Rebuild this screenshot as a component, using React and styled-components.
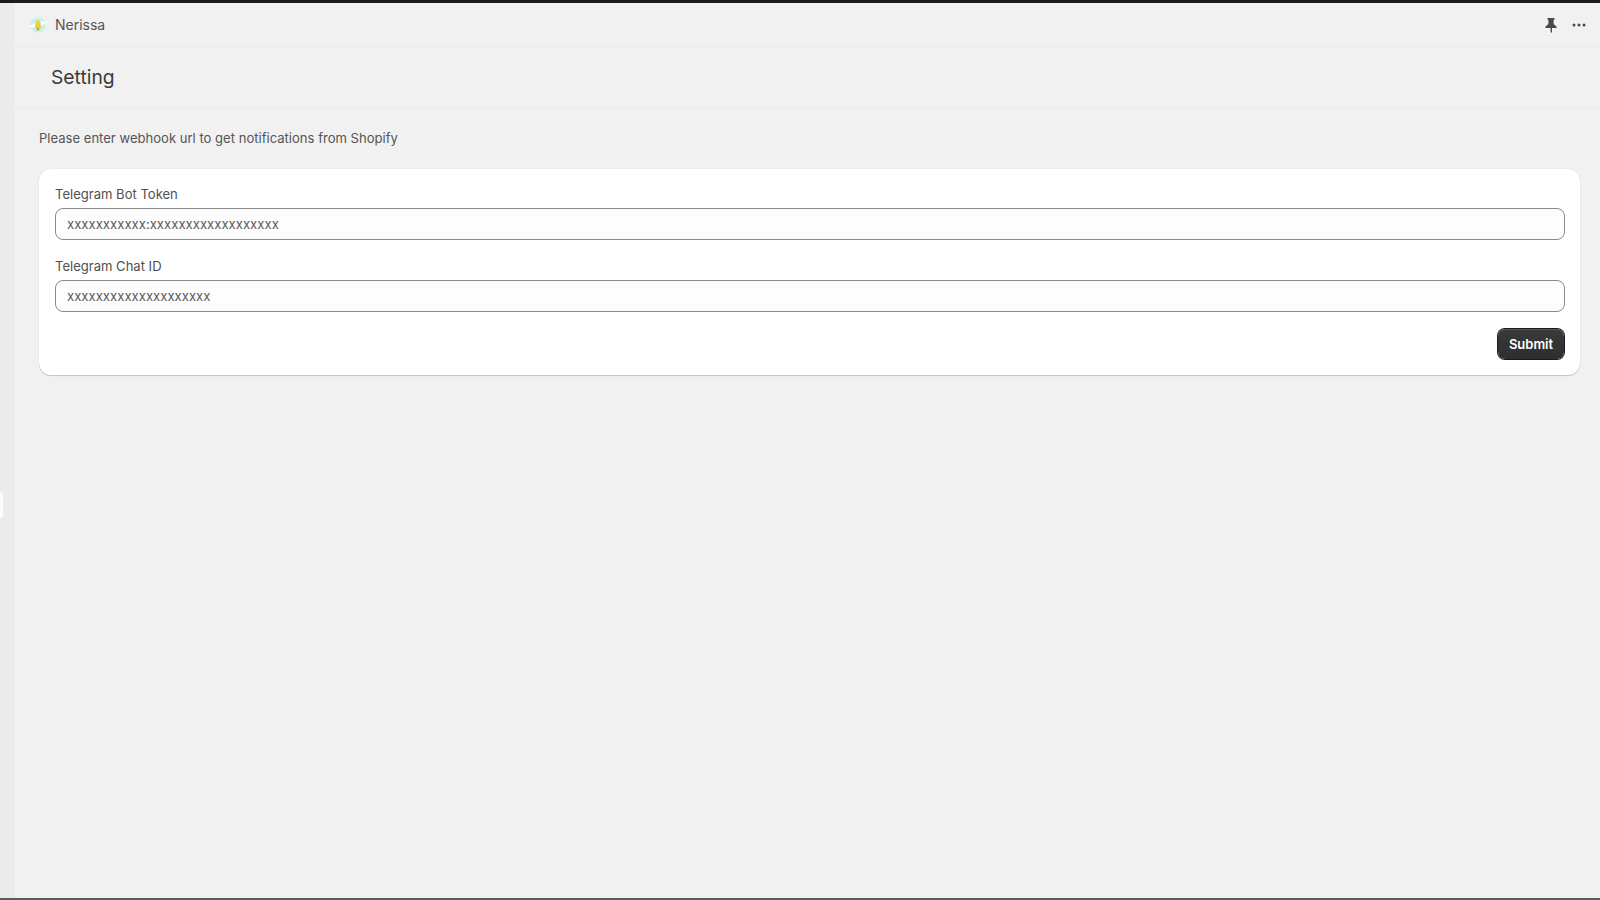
import React from 'react';
import styled, { createGlobalStyle } from 'styled-components';

const Global = createGlobalStyle`
  html, body { margin: 0; height: 100%; background: #f1f1f1; }
  body { font-family: Inter, "Liberation Sans", sans-serif; overflow: hidden; }
  * { box-sizing: border-box; }
`;
const Frame = styled.div`
  width: 1600px; height: 900px; display: flex; flex-direction: column;
  border-top: 3px solid #1a1a1a; border-bottom: 2px solid #5c5c5c; background: #f1f1f1;
`;
const Shell = styled.div`display: flex; flex: 1; min-height: 0;`;
const Rail = styled.aside`
  width: 15px; background: #ebebeb; position: relative;
`;
const RailTab = styled.span`
  position: absolute; left: 0; top: 489px; width: 3px; height: 26px;
  background: #fbfbfb; border-radius: 0 4px 4px 0;
`;
const Main = styled.main`flex: 1; display: flex; flex-direction: column; min-width: 0;`;
const TopBar = styled.header`
  height: 44px; display: flex; align-items: center; justify-content: space-between;
  padding: 0 14px 0 13px; border-bottom: 1px solid #ebebeb;
`;
const Brand = styled.div`display: flex; align-items: center; gap: 7px;`;
const AppName = styled.span`font-size: 14px; color: #555; line-height: 20px;`;
const Actions = styled.div`display: flex; align-items: center; gap: 14px;`;
const PageHead = styled.div`
  height: 61px; display: flex; align-items: center; padding-left: 36px; border-bottom: 1px solid #ebebeb;
`;
const Title = styled.h1`margin: 0; font-size: 19.3px; font-weight: 400; color: #3a3a3a; line-height: 28px;`;
const Body = styled.div`padding: 20px 20px 0 24px;`;
const Hint = styled.p`margin: 0 0 21px; font-size: 13.07px; line-height: 20px; color: #555;`;
const Card = styled.form`
  background: #fff; border-radius: 12px; padding: 15px 15px 15px 16px;
  box-shadow: 0 1px 1px rgba(0,0,0,.18), 0 0 1px rgba(0,0,0,.14);
  height: 206px;
`;
const Field = styled.label`display: block; margin-bottom: 16px;`;
const Label = styled.span`display: block; font-size: 13.05px; line-height: 20px; color: #4f4f4f; margin-bottom: 4px;`;
const Input = styled.div`
  height: 32px; border: 1px solid #8a8a8a; border-radius: 8px; background: #fdfdfd;
  padding: 0 11px; display: flex; align-items: center; font-size: 13.15px; color: #5c5c5c;
`;
const Footer = styled.div`display: flex; justify-content: flex-end; padding: 1px;`;
const Submit = styled.button`
  width: 66px; height: 30px; border: none; border-radius: 7px; padding: 0;
  background: linear-gradient(#3a3a3a, #2e2e2e);
  box-shadow: inset 0 1px 0 #555, 0 0 0 1px #1a1a1a;
  color: #fff; font: 600 13px Inter, "Liberation Sans", sans-serif;
`;

const Logo = () => (
  <svg width="20" height="16" viewBox="0 0 20 16">
    <ellipse cx="10" cy="8" rx="8" ry="7.5" fill="#c8efec" />
    <path d="M0.5 9.5 L7 6 L7.5 11 Z" fill="#fff" />
    <path d="M12.5 4 L19.5 5 L13.5 8.5 Z" fill="#fff" />
    <path d="M6.5 11 C8 8 7 3 10 3 C13 3 12 8 13.5 11 Z" fill="#f2cf3f" />
    <circle cx="10" cy="12" r="1.6" fill="#cba62c" />
  </svg>
);
const Pin = () => (
  <svg width="14" height="16" viewBox="0 0 14 16">
    <path d="M3.5 1h7v1.5L9.6 3v4l2.9 2.4V11H8v4.5H6.6V11H1.5V9.4L4.4 7V3l-.9-.5z" fill="#4a4a4a" />
  </svg>
);
const Dots = () => (
  <svg width="14" height="4" viewBox="0 0 14 4">
    <circle cx="2" cy="2" r="1.5" fill="#4a4a4a" /><circle cx="7" cy="2" r="1.5" fill="#4a4a4a" /><circle cx="12" cy="2" r="1.5" fill="#4a4a4a" />
  </svg>
);

export default function App() {
  return (
    <>
      <Global />
      <Frame>
        <Shell>
          <Rail><RailTab /></Rail>
          <Main>
            <TopBar>
              <Brand><Logo /><AppName>Nerissa</AppName></Brand>
              <Actions><Pin /><Dots /></Actions>
            </TopBar>
            <PageHead><Title>Setting</Title></PageHead>
            <Body>
              <Hint>Please enter webhook url to get notifications from Shopify</Hint>
              <Card>
                <Field>
                  <Label>Telegram Bot Token</Label>
                  <Input>xxxxxxxxxxx:xxxxxxxxxxxxxxxxxx</Input>
                </Field>
                <Field>
                  <Label>Telegram Chat ID</Label>
                  <Input>xxxxxxxxxxxxxxxxxxxx</Input>
                </Field>
                <Footer><Submit type="button">Submit</Submit></Footer>
              </Card>
            </Body>
          </Main>
        </Shell>
      </Frame>
    </>
  );
}
